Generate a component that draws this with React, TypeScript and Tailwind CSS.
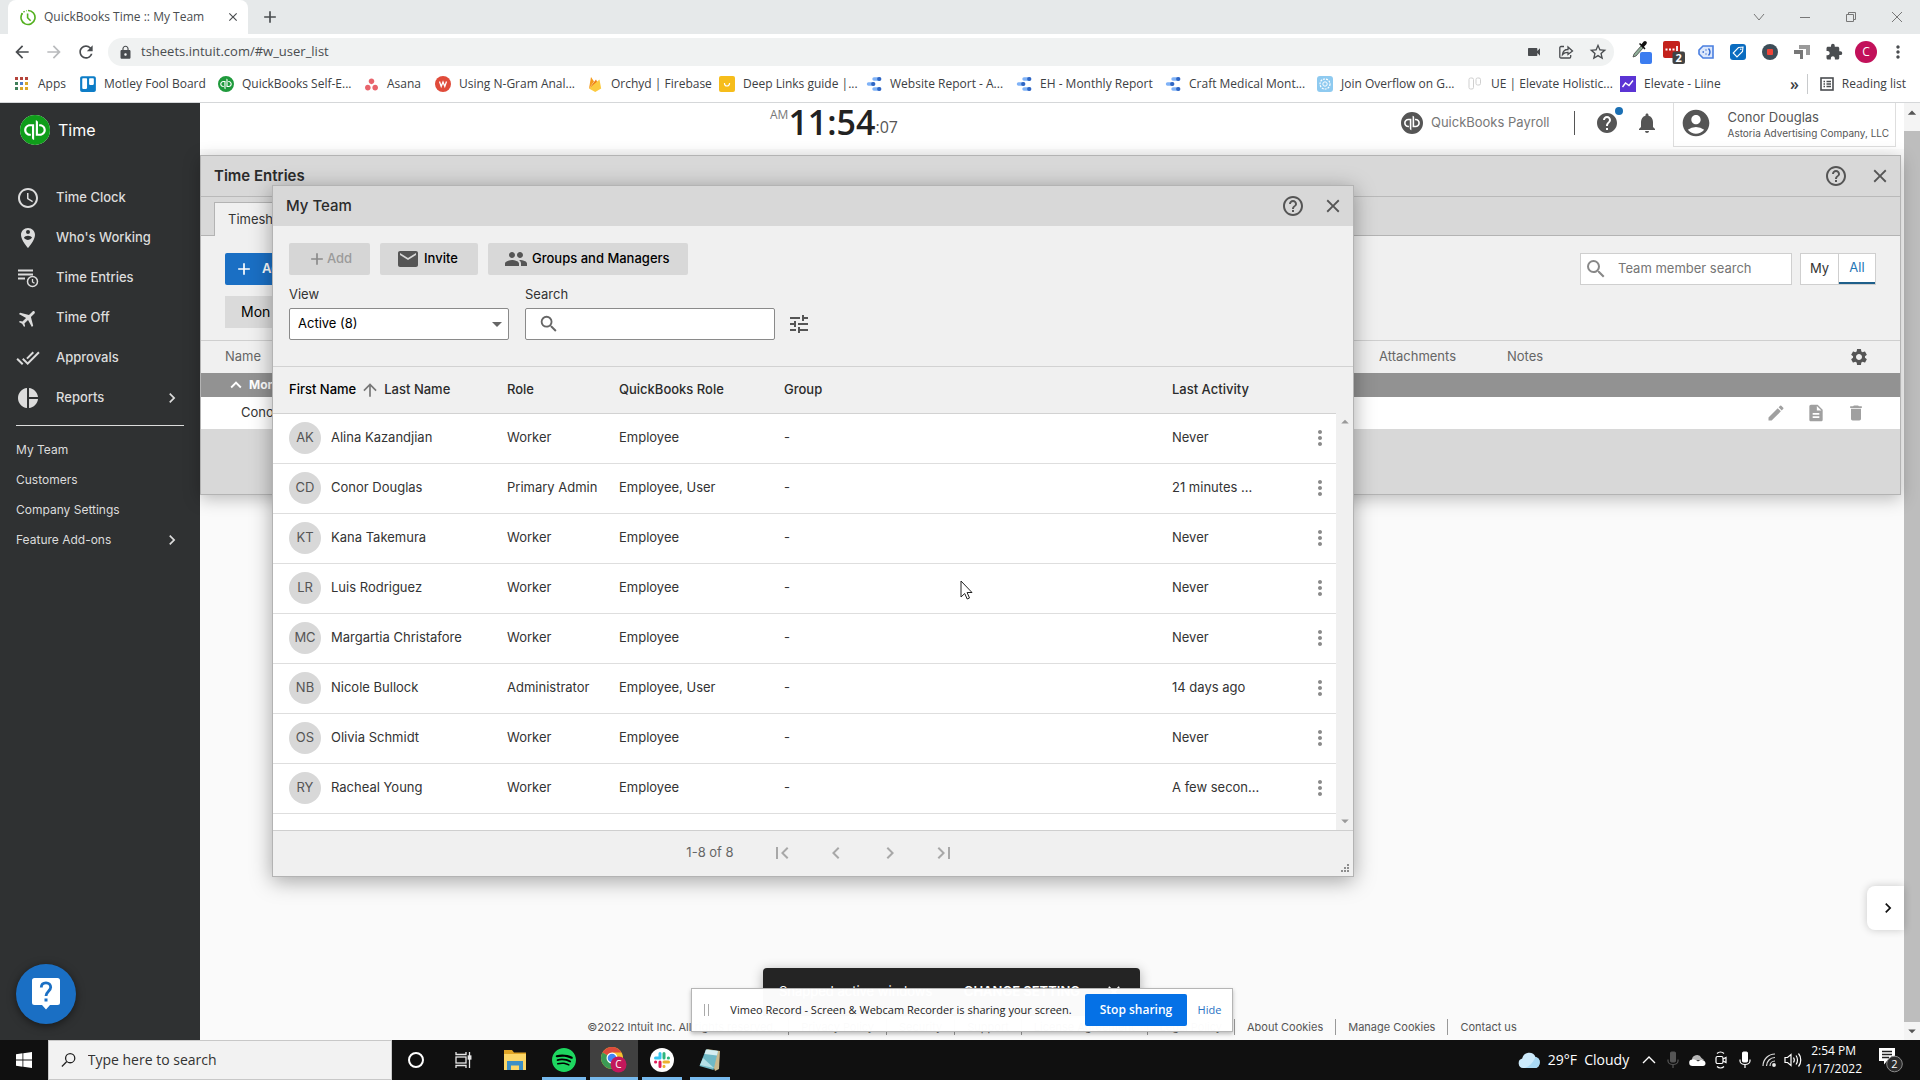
import React from 'react';
import { clsx } from 'clsx';
import {
  MdAccessTime,
  MdAccountCircle,
  MdAdd,
  MdAirplanemodeActive,
  MdArrowBack,
  MdArrowDropDown,
  MdArrowDropUp,
  MdArrowForward,
  MdArrowUpward,
  MdChevronLeft,
  MdChevronRight,
  MdClose,
  MdCreate,
  MdDelete,
  MdDescription,
  MdDoneAll,
  MdEmail,
  MdExtension,
  MdFirstPage,
  MdHelp,
  MdHelpOutline,
  MdKeyboardArrowUp,
  MdLastPage,
  MdLock,
  MdMoreVert,
  MdNotifications,
  MdPeople,
  MdPersonPinCircle,
  MdPieChart,
  MdRefresh,
  MdSearch,
  MdSettings,
  MdStarBorder,
  MdTune,
  MdVideocam,
} from 'react-icons/md';
import { SiAsana, SiQuickbooks, SiSpotify } from 'react-icons/si';
import { FaTrello } from 'react-icons/fa';

const ui = "font-['Open_Sans','Noto_Sans',sans-serif]";

/* ---------- small drawings ---------- */

function QbMark({ size, className }: { size: number; className: string }) {
  return (
    <span className="inline-flex shrink-0 rounded-full bg-white">
      <SiQuickbooks size={size} className={className} />
    </span>
  );
}

function TabClock() {
  return (
    <svg width="16" height="17" viewBox="0 0 16 17" fill="none" stroke="#53b01e">
      <path d="M8 1.5a7 7 0 1 1-5.6 2.8" strokeWidth="1.6" />
      <path d="M1.6 5.5a7 7 0 0 1 5-3.9" strokeWidth="1.4" strokeDasharray="1.5 1.5" />
      <path d="M7.6 4.5v4.2l3 3" strokeWidth="1.6" />
    </svg>
  );
}

function AppsGrid() {
  const colors = ['#b5443b', '#b5443b', '#b5443b', '#3f7f5a', '#4d7fd0', '#d9a72c', '#3f7f5a', '#d9a72c', '#d9a72c'];
  return (
    <svg width="14" height="14" viewBox="0 0 14 14">
      {colors.map((c, i) => (
        <rect key={i} x={(i % 3) * 5} y={Math.floor(i / 3) * 5} width="3" height="3" fill={c} />
      ))}
    </svg>
  );
}

function WMark() {
  return (
    <svg width="16" height="16" viewBox="0 0 16 16">
      <circle cx="8" cy="8" r="8" fill="#e04b3a" />
      <path d="M4.5 5.5 6.2 10.500 8 6l1.800 4.500 1.700-5" fill="none" stroke="#fff" strokeWidth="1.300" />
    </svg>
  );
}

function FirebaseMark() {
  return (
    <svg width="14" height="16" viewBox="0 0 14 16">
      <path d="M1 12.500 3 1l3 4.500z" fill="#f59a1c" />
      <path d="M1 12.500 8 3.500l1.800 4z" fill="#ee7f15" />
      <path d="M1 12.500 11.500 3.500 13.200 12.500 7.200 16z" fill="#fcca3f" />
    </svg>
  );
}

function SmileMark() {
  return (
    <svg width="16" height="16" viewBox="0 0 16 16">
      <rect width="16" height="16" rx="2" fill="#f6bd1b" />
      <path d="M5.500 7v.5a2.500 2.500 0 0 0 5 0V7" fill="none" stroke="#fff" strokeWidth="1.200" />
    </svg>
  );
}

function DataStudioMark() {
  return (
    <svg width="16" height="14" viewBox="0 0 16 14" strokeLinecap="round" strokeWidth="3.400">
      <path d="M8 2h4M2.500 7H6M8 12h4" stroke="#7fb2f7" />
      <path d="M13 2h.5M7 7h.5M13 12h.5" stroke="#2f66c4" strokeWidth="3.800" />
    </svg>
  );
}

function OverflowMark() {
  return (
    <svg width="16" height="16" viewBox="0 0 16 16" fill="none" stroke="#fff">
      <rect width="16" height="16" rx="3" fill="#8ecaf0" stroke="none" />
      <circle cx="8" cy="8" r="5" strokeWidth="1.200" strokeDasharray="2 1" />
      <circle cx="8" cy="8" r="2.200" />
    </svg>
  );
}

function BoardsMark() {
  return (
    <svg width="14" height="14" viewBox="0 0 14 14" fill="none" stroke="#cfcfcf">
      <rect x="1" y="1" width="4.500" height="11" rx="1.500" />
      <rect x="8" y="1" width="4.500" height="7" rx="1.500" />
    </svg>
  );
}

function LiineMark() {
  return (
    <svg width="16" height="16" viewBox="0 0 16 16">
      <rect width="16" height="16" fill="#5b34d4" />
      <path d="m2.500 11 3-4 3.500 2.500 4-5" fill="none" stroke="#fff" strokeWidth="1.400" />
    </svg>
  );
}

function ReadingListIcon() {
  return (
    <svg width="14" height="14" viewBox="0 0 14 14" fill="none" stroke="#4a4d50" strokeWidth="1.600">
      <rect x="1" y="1" width="12" height="12" />
      <path d="M3.500 4.500h1.500M3.500 7h1.500M3.500 9.500h1.500M6.500 4.500h4.500M6.500 7h4.500M6.500 9.500h4.500" strokeWidth="1.300" />
    </svg>
  );
}

function ShareIcon() {
  return (
    <svg width="16" height="16" viewBox="0 0 16 16" fill="none" stroke="#4a4d50" strokeWidth="1.300">
      <path d="M6 2.500H3a1.200 1.200 0 0 0-1.200 1.200v9A1.200 1.200 0 0 0 3 14h8.500a1.200 1.200 0 0 0 1.200-1.200V11" />
      <path d="M4.500 10.500c.4-3.500 2.500-5 5.500-5V3l4.500 4L10 10.500V8.300c-2.500 0-4.200.6-5.500 2.200z" />
    </svg>
  );
}

function EyedropperIcon() {
  return (
    <svg width="20" height="24" viewBox="0 0 20 24">
      <rect x="8" y="12" width="12" height="12" rx="2" fill="#3b7cf0" />
      <path d="m1 17 1-3 7-8 2 2-7 8z" fill="#8fae98" stroke="#444" strokeWidth=".8" />
      <path d="m7 4 5.500 5.500 1-1-1.500-1.700 2.300-2.600a1.800 1.800 0 0 0-2.600-2.600L9.500 4.200 8 3z" fill="#111" />
    </svg>
  );
}

function RedDotsIcon() {
  return (
    <svg width="22" height="24" viewBox="0 0 22 24">
      <rect y="1" width="17" height="17" rx="2" fill="#c4221c" />
      <path d="M2.500 9.500h2M6 9.500h2M9.500 9.500h2M14 6v5" stroke="#fff" strokeWidth="1.800" />
      <rect x="9.500" y="11.500" width="12.500" height="12.500" rx="2" fill="#434343" />
      <text x="15.700" y="22" textAnchor="middle" fontSize="11" fontWeight="700" fill="#fff" fontFamily="Open Sans, sans-serif">2</text>
    </svg>
  );
}

function BlueTagIcon() {
  return (
    <svg width="16" height="14" viewBox="0 0 16 14">
      <path d="M5 1h10v12H5L1 9V5z" fill="#dbe7fb" stroke="#4a7fe0" strokeWidth="1.600" />
      <path d="M4.500 7h1.500M8 4.500v1M8 8.500v1M10.500 3.500c1.700 2 1.700 5 0 7" stroke="#2f66d0" strokeWidth="1.400" fill="none" />
    </svg>
  );
}

function TagIcon() {
  return (
    <svg width="16" height="16" viewBox="0 0 16 16">
      <rect width="16" height="16" rx="3" fill="#0a6cc0" />
      <path d="M8.500 3.500 13 3l-.5 4.500L7 13 3.200 9z" fill="none" stroke="#fff" strokeWidth="1.100" />
      <circle cx="10.800" cy="5.300" r=".8" fill="#fff" />
    </svg>
  );
}

function RecordIcon() {
  return (
    <svg width="16" height="16" viewBox="0 0 16 16">
      <circle cx="8" cy="8" r="8" fill="#3d4d58" />
      <rect x="5" y="5" width="6" height="6" rx="1" fill="#f04438" />
    </svg>
  );
}

function CornersIcon() {
  return (
    <svg width="16" height="16" viewBox="0 0 16 16">
      <path d="M5 1h11v10h-4V5H5z" fill="#9a9a9a" />
      <path d="M0 6h9v9H6v-5H0z" fill="#777" />
    </svg>
  );
}

function ListClockIcon() {
  return (
    <svg width="22" height="20" viewBox="0 0 22 20" fill="none" stroke="currentColor">
      <path d="M1 2.500h15M1 6.500h15M1 10.500h7" strokeWidth="2" />
      <circle cx="15.500" cy="13.500" r="5" strokeWidth="1.500" />
      <path d="M15.500 11v3l2 1.300" strokeWidth="1.300" />
    </svg>
  );
}

function HelpBubble() {
  return (
    <svg width="28" height="32" viewBox="0 0 28 32">
      <path d="M2.500 0h23A2.500 2.500 0 0 1 28 2.500v22a2.500 2.500 0 0 1-2.500 2.500H18l-4 4.500-4-4.500H2.500A2.500 2.500 0 0 1 0 24.500v-22A2.500 2.500 0 0 1 2.500 0z" fill="#fff" />
      <path d="M9.300 9.500c0-3 2-4.700 4.700-4.700s4.700 1.700 4.700 4.500c0 3.700-4.700 4.200-4.700 8.700" fill="none" stroke="#1a6fc4" strokeWidth="2.800" />
      <rect x="12.500" y="20.500" width="3" height="3" fill="#1a6fc4" />
    </svg>
  );
}

function ChromeMark() {
  return (
    <svg width="28" height="28" viewBox="0 0 28 28">
      <circle cx="12" cy="12" r="11" fill="#f3c32f" />
      <path d="M12 12 2.500 6.500A11 11 0 0 1 21.500 6.500H12z" fill="#dd4b3c" />
      <path d="M12 12 2.500 6.500A11 11 0 0 0 11.500 23l5-8.500z" fill="#3b9a55" />
      <circle cx="12" cy="12" r="5.500" fill="#fff" />
      <circle cx="12" cy="12" r="4.300" fill="#4285f4" />
      <circle cx="18.500" cy="18.500" r="8" fill="#c2185b" />
      <text x="18.500" y="22" textAnchor="middle" fontSize="10" fill="#fff" fontFamily="Open Sans, sans-serif">C</text>
    </svg>
  );
}

function SlackMark() {
  return (
    <svg width="24" height="24" viewBox="0 0 24 24" strokeLinecap="round" strokeWidth="3">
      <circle cx="12" cy="12" r="12" fill="#fff" />
      <path d="M10 5.500v4M5.500 10H10" stroke="#36c5f0" />
      <path d="M14 5.500V10M18.500 10h-.2" stroke="#2eb67d" />
      <path d="M14 14h4.500M14 18.500v-.2" stroke="#ecb22e" />
      <path d="M10 14v4.500M5.500 14h.2" stroke="#e01e5a" />
    </svg>
  );
}

function NotepadMark() {
  return (
    <svg width="24" height="24" viewBox="0 0 24 24">
      <path d="M9 1 22 3 21 21l-4 2z" fill="#c9b98d" />
      <path d="M8 1.500 20 3 15.500 22 1.500 18z" fill="#6fb9c6" />
      <path d="M8 1.500 20 3l-1 4.500L6.500 6z" fill="#d6eef1" />
      <path d="M5 10l11 10-14-3z" fill="#b6e0e6" />
    </svg>
  );
}

function FolderMark() {
  return (
    <svg width="22" height="22" viewBox="0 0 22 22">
      <path d="M0 1h8l2 2.500h12V9H0z" fill="#e0a526" />
      <path d="M0 5h22v16H0z" fill="#fbd667" />
      <path d="M3 12h16v9h-4v-4.500H7V21H3z" fill="#3c8fc6" />
    </svg>
  );
}

function TaskViewIcon() {
  return (
    <svg width="18" height="18" viewBox="0 0 18 18" fill="none" stroke="#e8e8e8" strokeWidth="1.300">
      <path d="M1 1v2.500h10V1M1 17v-2.500h10V17M14.500 1v16" />
      <rect x="1" y="6" width="10" height="6" />
      <rect x="13.300" y="5" width="2.500" height="3" fill="#e8e8e8" />
    </svg>
  );
}

function CloudMark() {
  return (
    <svg width="22" height="18" viewBox="0 0 22 18">
      <path d="M5 17a4.800 4.800 0 0 1-.8-9.400A7 7 0 0 1 17.500 6 5.600 5.600 0 0 1 16.500 17z" fill="#cdeafb" />
      <path d="M5 17c4 0 9-3 12.500-11A5.600 5.600 0 0 1 16.500 17z" fill="#a9d9f5" />
    </svg>
  );
}

function OneDriveMark() {
  return (
    <svg width="17" height="12" viewBox="0 0 17 12">
      <path d="M3 6.500A5 5 0 0 1 12.500 4L15 6z" fill="#b5b5b5" />
      <path d="M3.500 12a3.300 3.300 0 0 1 0-6.600c2-.3 4 1 5.500 2 1.500-2 7-2.500 7.500 1.500.2 1.800-1 3.100-2.500 3.100z" fill="#fff" />
    </svg>
  );
}

function MeetNowIcon() {
  return (
    <svg width="14" height="18" viewBox="0 0 14 18" fill="none" stroke="#fff" strokeWidth="1.200">
      <rect x="2" y="5.500" width="7" height="7" rx="1.500" />
      <path d="m9 8 3-1.500v5L9 10M3 2.500c2-1.800 5-1.800 7 0M3 15.500c2 1.800 5 1.800 7 0" />
    </svg>
  );
}

function MicIcon({ color }: { color: string }) {
  return (
    <svg width="12" height="18" viewBox="0 0 12 18" fill="none" stroke={color}>
      <rect x="3.500" y="1" width="5" height="10" rx="1" fill={color} />
      <path d="M1 8.500v1.500a5 3.500 0 0 0 10 0V8.500M6 13.500V17" strokeWidth="1.200" />
    </svg>
  );
}

function WifiIcon() {
  return (
    <svg width="14" height="14" viewBox="0 0 14 14" fill="none" stroke="#ddd" strokeWidth="1.200">
      <path d="M1 13C1 6.400 6.400 1 13 1M4.500 13c0-4.700 3.800-8.500 8.500-8.500M8 13c0-2.800 2.200-5 5-5" />
      <circle cx="12" cy="12" r="1.300" fill="#fff" />
    </svg>
  );
}

function SpeakerIcon() {
  return (
    <svg width="18" height="16" viewBox="0 0 18 16" fill="none" stroke="#fff" strokeWidth="1.200">
      <path d="M1 5.500h2.500L7 2.500v11l-3.500-3H1zM9.500 5.500c1 1.500 1 3.500 0 5M12 3.500c2 2.500 2 6.500 0 9M14.500 1.500c3 3.500 3 9.500 0 13" />
    </svg>
  );
}

function ActionCenterIcon() {
  return (
    <svg width="26" height="26" viewBox="0 0 26 26">
      <path d="M1 1h16v13H9l-3 3.500V14H1z" fill="#fff" />
      <path d="M4 4.500h10M4 7.500h10M4 10.500h7" stroke="#222" strokeWidth="1.300" />
      <circle cx="16.500" cy="17" r="7.800" fill="#2b2b2b" stroke="#8a8a8a" />
      <text x="16.500" y="21" textAnchor="middle" fontSize="11" fill="#fff" fontFamily="Open Sans, sans-serif">2</text>
    </svg>
  );
}

/* ---------- data ---------- */

const bookmarks = [
  { label: 'Apps', width: 'w-[66px]', icon: <AppsGrid /> },
  { label: 'Motley Fool Board', width: 'w-[138px]', icon: <FaTrello size={18} color="#0d7dc7" /> },
  { label: 'QuickBooks Self-E...', width: 'w-[145px]', icon: <QbMark size={16} className="text-[#1f9a3c]" /> },
  { label: 'Asana', width: 'w-[72px]', icon: <SiAsana size={13} color="#e8646c" /> },
  { label: 'Using N-Gram Anal...', width: 'w-[152px]', icon: <WMark /> },
  { label: 'Orchyd | Firebase', width: 'w-[132px]', icon: <FirebaseMark /> },
  { label: 'Deep Links guide |...', width: 'w-[147px]', icon: <SmileMark /> },
  { label: 'Website Report - A...', width: 'w-[150px]', icon: <DataStudioMark /> },
  { label: 'EH - Monthly Report', width: 'w-[149px]', icon: <DataStudioMark /> },
  { label: 'Craft Medical Mont...', width: 'w-[152px]', icon: <DataStudioMark /> },
  { label: 'Join Overflow on G...', width: 'w-[150px]', icon: <OverflowMark /> },
  { label: 'UE | Elevate Holistic...', width: 'w-[153px]', icon: <BoardsMark /> },
  { label: 'Elevate - Liine', width: 'w-[120px]', icon: <LiineMark /> },
];

const extensions = [
  { name: 'Color picker', icon: <EyedropperIcon /> },
  { name: 'Passwords', icon: <RedDotsIcon /> },
  { name: 'Tag assistant', icon: <BlueTagIcon /> },
  { name: 'Tags', icon: <TagIcon /> },
  { name: 'Recorder', icon: <RecordIcon /> },
  { name: 'Corners', icon: <CornersIcon /> },
  { name: 'Extensions', icon: <MdExtension size={18} /> },
];

const trayIcons = [
  { name: 'Microphone off', icon: <MicIcon color="#555" /> },
  { name: 'OneDrive', icon: <OneDriveMark /> },
  { name: 'Meet Now', icon: <MeetNowIcon /> },
  { name: 'Microphone', icon: <MicIcon color="#fff" /> },
  { name: 'Network', icon: <WifiIcon /> },
  { name: 'Volume', icon: <SpeakerIcon /> },
];

const navItems = [
  { label: 'Time Clock', icon: <MdAccessTime size={24} /> },
  { label: "Who's Working", icon: <MdPersonPinCircle size={24} /> },
  { label: 'Time Entries', icon: <ListClockIcon /> },
  { label: 'Time Off', icon: <MdAirplanemodeActive size={22} className="rotate-45" /> },
  { label: 'Approvals', icon: <MdDoneAll size={24} /> },
  { label: 'Reports', icon: <MdPieChart size={24} />, more: true },
];

const subItems = [
  { label: 'My Team' },
  { label: 'Customers' },
  { label: 'Company Settings' },
  { label: 'Feature Add-ons', more: true },
];

interface Member {
  initials: string;
  name: string;
  role: string;
  qbRole: string;
  activity: string;
}

const members: Member[] = [
  { initials: 'AK', name: 'Alina Kazandjian', role: 'Worker', qbRole: 'Employee', activity: 'Never' },
  { initials: 'CD', name: 'Conor Douglas', role: 'Primary Admin', qbRole: 'Employee, User', activity: '21 minutes ...' },
  { initials: 'KT', name: 'Kana Takemura', role: 'Worker', qbRole: 'Employee', activity: 'Never' },
  { initials: 'LR', name: 'Luis Rodriguez', role: 'Worker', qbRole: 'Employee', activity: 'Never' },
  { initials: 'MC', name: 'Margartia Christafore', role: 'Worker', qbRole: 'Employee', activity: 'Never' },
  { initials: 'NB', name: 'Nicole Bullock', role: 'Administrator', qbRole: 'Employee, User', activity: '14 days ago' },
  { initials: 'OS', name: 'Olivia Schmidt', role: 'Worker', qbRole: 'Employee', activity: 'Never' },
  { initials: 'RY', name: 'Racheal Young', role: 'Worker', qbRole: 'Employee', activity: 'A few secon...' },
];

/* ---------- browser ---------- */

function BrowserChrome() {
  return (
    <header className={clsx('shrink-0 border-b border-[#d5d7d9] bg-white text-[#4a4d50]', ui)}>
      <div className="flex h-[34px] items-stretch bg-[#e6e9ea] pl-2">
        <div className="flex w-60 items-center rounded-t-lg bg-white pl-3 pr-2">
          <TabClock />
          <span className="ml-2 flex-1 text-xs">QuickBooks Time :: My Team</span>
          <button aria-label="Close tab"><MdClose size={14} /></button>
        </div>
        <button aria-label="New tab" className="ml-3"><MdAdd size={20} /></button>
        <div className="ml-auto flex items-center text-[#777]">
          <button aria-label="Search tabs" className="flex w-[46px] justify-center">
            <svg width="12" height="12" viewBox="0 0 12 12" fill="none" stroke="currentColor"><path d="m1 3 5 6 5-6" /></svg>
          </button>
          <button aria-label="Minimize" className="flex w-[46px] justify-center">
            <svg width="12" height="12" viewBox="0 0 12 12" stroke="currentColor"><path d="M1 6.500h10" /></svg>
          </button>
          <button aria-label="Restore" className="flex w-[46px] justify-center">
            <svg width="12" height="12" viewBox="0 0 12 12" fill="none" stroke="currentColor"><path d="M1.500 3.500h7v7h-7zM3.500 3.500v-2h7v7h-2" /></svg>
          </button>
          <button aria-label="Close window" className="flex w-[46px] justify-center">
            <svg width="12" height="12" viewBox="0 0 12 12" stroke="currentColor"><path d="m1 1 10 10M11 1 1 11" /></svg>
          </button>
        </div>
      </div>

      <div className="flex h-9 items-center">
        <div className="flex w-[108px] items-center justify-between pl-3 pr-3">
          <button aria-label="Back"><MdArrowBack size={20} /></button>
          <button aria-label="Forward"><MdArrowForward size={20} className="text-[#b9bbbd]" /></button>
          <button aria-label="Reload"><MdRefresh size={20} /></button>
        </div>
        <div className="flex h-7 flex-1 items-center rounded-full bg-[#f0f2f2] pl-[10px]">
          <MdLock size={15} />
          <input
            aria-label="Address"
            className="ml-2 flex-1 bg-transparent text-[13px] outline-none"
            defaultValue="tsheets.intuit.com/#w_user_list"
          />
          <span className="flex w-8 justify-center"><MdVideocam size={16} /></span>
          <span className="flex w-8 justify-center"><ShareIcon /></span>
          <span className="flex w-8 justify-center"><MdStarBorder size={20} /></span>
        </div>
        <div className="flex h-7 items-center pl-3 pr-[6px]">
          {extensions.map((e) => (
            <button key={e.name} aria-label={e.name} className="flex w-8 justify-center">{e.icon}</button>
          ))}
          <span className="flex w-8 justify-center">
            <span className="flex h-[22px] w-[22px] items-center justify-center rounded-full bg-[#c2115a] text-xs text-white">C</span>
          </span>
          <button aria-label="Menu" className="flex w-8 justify-center"><MdMoreVert size={20} /></button>
        </div>
      </div>

      <nav className="flex h-8 items-center pb-1 pl-[14px] text-xs text-[#3c4043]">
        {bookmarks.map((b) => (
          <a key={b.label} href="#" className={clsx('flex shrink-0 items-center gap-2 whitespace-nowrap', b.width)}>
            <span className="flex w-4 shrink-0 justify-center">{b.icon}</span>
            {b.label}
          </a>
        ))}
        <div className="ml-auto flex items-center pr-[14px]">
          <span className="mr-2 text-base font-semibold leading-5">»</span>
          <span className="mr-3 h-5 w-px bg-[#c8cacc]" />
          <ReadingListIcon />
          <span className="ml-2">Reading list</span>
        </div>
      </nav>
    </header>
  );
}

/* ---------- app ---------- */

function Sidebar() {
  return (
    <aside className="flex w-[200px] shrink-0 flex-col bg-[#2f3132] text-[13px] text-[#dcdcdc]">
      <div className="flex h-[54px] items-center gap-2 pl-5 text-base text-white">
        <QbMark size={30} className="text-[#0f9d1a]" />
        Time
      </div>
      <nav className="pt-[21px]">
        {navItems.map((item) => (
          <a key={item.label} href="#" className="flex h-10 items-center pl-4 pr-[18px] font-medium">
            <span className="mr-4 flex w-6 justify-center">{item.icon}</span>
            {item.label}
            {item.more && <MdChevronRight size={20} className="ml-auto" />}
          </a>
        ))}
      </nav>
      <hr className="mx-4 mb-[9px] mt-[7px] border-[#dcdcdc]" />
      <nav className="text-xs">
        {subItems.map((item) => (
          <a key={item.label} href="#" className="flex h-[30px] items-center pl-4 pr-[18px]">
            {item.label}
            {item.more && <MdChevronRight size={20} className="ml-auto" />}
          </a>
        ))}
      </nav>
      <button
        aria-label="Help"
        className="mb-4 ml-4 mt-auto flex h-[60px] w-[60px] items-center justify-center rounded-full bg-[#1a6fc4] shadow-[0_2px_8px_rgba(0,0,0,0.5)]"
      >
        <HelpBubble />
      </button>
    </aside>
  );
}

function TopBar() {
  return (
    <div className="flex h-[46px] shrink-0 items-start justify-between bg-white pl-[570px] text-[#555]">
      <div className={clsx('flex items-start', ui)}>
        <span className="pt-1 text-xs text-[#777]">AM</span>
        <span className="text-[34px] font-semibold leading-[38px] text-[#222]">11:54</span>
        <span className="pt-3 text-base text-[#555]">:07</span>
      </div>
      <div className="flex items-start pr-2">
        <div className="flex h-10 items-center">
          <QbMark size={22} className="text-[#555]" />
          <span className="ml-2 text-[13px] text-[#777]">QuickBooks Payroll</span>
          <span className="ml-6 mr-5 h-6 w-px bg-[#555]" />
          <button aria-label="Help" className="relative">
            <MdHelp size={24} />
            <span className="absolute -right-1 -top-1 h-2 w-2 rounded-full bg-[#1a6fb4]" />
          </button>
          <button aria-label="Notifications" className="ml-4 mr-[14px]"><MdNotifications size={24} /></button>
        </div>
        <div className="flex h-11 items-center border border-t-0 border-[#dedede] pb-1 pl-[6px] pr-[6px]">
          <MdAccountCircle size={32} className="mr-4" />
          <div className="pt-1 leading-4">
            <div className="text-[13px]">Conor Douglas</div>
            <div className="text-[10px]">Astoria Advertising Company, LLC</div>
          </div>
        </div>
      </div>
    </div>
  );
}

function TimeEntriesWindow() {
  return (
    <section className="mr-[3px] mt-[6px] border border-[#b3b3b3] bg-[#d8d8d8] text-[13px] text-[#333] shadow-[0_4px_16px_rgba(0,0,0,0.25)]">
      <div className="flex h-10 items-center pl-[13px] pr-[9px]">
        <h2 className="text-[15px] font-semibold text-[#2b2b2b]">Time Entries</h2>
        <div className="ml-auto flex items-center gap-[21px] text-[#555]">
          <button aria-label="Time Entries help"><MdHelpOutline size={24} /></button>
          <button aria-label="Close Time Entries"><MdClose size={22} /></button>
        </div>
      </div>
      <div className="flex h-10 items-end border-t border-[#b9b9b9]">
        <span className="h-px w-[13px] bg-[#b3b3b3]" />
        <button className="h-[34px] w-32 border-l border-t border-[#b3b3b3] bg-[#f0f0f0] pl-[13px] text-left">Timesheets</button>
        <span className="h-px flex-1 bg-[#b3b3b3]" />
      </div>
      <div className="flex h-[104px] items-start bg-[#f0f0f0] px-6 pt-[17px]">
        <div className="flex flex-col items-start gap-[11px]">
          <button className="flex h-8 w-28 items-center gap-2 rounded-xs bg-[#1a6fc4] pl-[9px] font-semibold text-white">
            <MdAdd size={20} />
            Add time
          </button>
          <button className="flex h-8 w-28 items-center bg-[#dadada] pl-4 text-sm text-black">Mon</button>
        </div>
        <div className="ml-auto flex gap-2">
          <label className="flex h-8 w-[212px] items-center border border-[#cfcfcf] bg-white pl-[3px] text-[#888]">
            <MdSearch size={24} className="shrink-0" />
            <input
              aria-label="Team member search"
              placeholder="Team member search"
              className="ml-[10px] w-full bg-transparent outline-none placeholder:text-[#757575]"
            />
          </label>
          <div className="flex h-8 border border-[#cfcfcf] bg-white">
            <button className="w-[38px] border-r border-[#cfcfcf]">My</button>
            <button className="w-9 border-b-2 border-[#1e5f8a] text-[#1f76b5]">All</button>
          </div>
        </div>
      </div>
      <table className="w-full table-fixed border-t border-[#cfcfcf]">
        <thead className="bg-[#f0f0f0] text-left text-[#666]">
          <tr className="h-8">
            <th className="w-[1178px] pl-6 font-normal">Name</th>
            <th className="w-32 font-normal">Attachments</th>
            <th className="font-normal">Notes</th>
            <th className="w-36 pr-[31px]">
              <button aria-label="Settings" className="ml-auto block"><MdSettings size={20} className="text-[#555]" /></button>
            </th>
          </tr>
        </thead>
        <tbody>
          <tr className="h-6 bg-[#929292] text-xs font-bold text-white">
            <td colSpan={4} className="pl-6">
              <span className="flex items-center gap-[2px]"><MdKeyboardArrowUp size={22} />Mon</span>
            </td>
          </tr>
          <tr className="h-8 bg-white">
            <td colSpan={3} className="pl-10">Conor</td>
            <td className="pr-[34px]">
              <div className="flex justify-end gap-5 text-[#a0a0a0]">
                <button aria-label="Edit"><MdCreate size={20} /></button>
                <button aria-label="Notes"><MdDescription size={20} /></button>
                <button aria-label="Delete"><MdDelete size={20} /></button>
              </div>
            </td>
          </tr>
        </tbody>
      </table>
      <div className="h-[65px]" />
    </section>
  );
}

function MyTeamWindow() {
  return (
    <section className="absolute left-[72px] top-[82px] w-[1082px] border border-[#b3b3b3] bg-[#f0f0f0] text-[13px] text-[#333] shadow-[0_4px_20px_rgba(0,0,0,0.35)]">
      <div className="flex h-10 items-center bg-[#d8d8d8] pl-[13px] pr-[9px]">
        <h2 className="text-[15px] font-medium text-[#2b2b2b]">My Team</h2>
        <div className="ml-auto flex items-center gap-[17px] text-[#555]">
          <button aria-label="My Team help"><MdHelpOutline size={24} /></button>
          <button aria-label="Close My Team"><MdClose size={22} /></button>
        </div>
      </div>

      <div className="h-[141px] border-b border-[#d2d2d2] px-4 pt-[17px]">
        <div className="flex gap-[10px] font-medium text-black">
          <button disabled className="flex h-8 w-[81px] items-center justify-center rounded-xs bg-[#d6d6d6] text-[#9b9b9b]">
            <MdAdd size={20} className="text-[#8a8a8a]" />
            Add
          </button>
          <button className="flex h-8 w-[98px] items-center gap-1 rounded-xs bg-[#d8d8d8] pl-4">
            <MdEmail size={24} className="text-[#555]" />
            Invite
          </button>
          <button className="flex h-8 w-[200px] items-center gap-1 rounded-xs bg-[#d8d8d8] pl-4">
            <MdPeople size={24} className="text-[#555]" />
            Groups and Managers
          </button>
        </div>
        <div className="mt-[9px] flex items-end gap-4">
          <div>
            <label htmlFor="view" className="block leading-5">View</label>
            <div className="relative mt-1">
              <select id="view" className="h-8 w-[220px] appearance-none rounded-xs border border-[#8a8a8a] bg-white pl-2 text-black">
                <option>Active (8)</option>
              </select>
              <MdArrowDropDown size={24} className="pointer-events-none absolute right-0 top-1 text-[#666]" />
            </div>
          </div>
          <div>
            <label htmlFor="search" className="block leading-5">Search</label>
            <div className="mt-1 flex h-8 w-[250px] items-center rounded-xs border border-[#8a8a8a] bg-white pl-3">
              <MdSearch size={24} className="text-[#666]" />
              <input id="search" className="w-full bg-transparent pl-2 outline-none" />
            </div>
          </div>
          <button aria-label="Filters" className="-ml-1 pb-1"><MdTune size={24} className="text-[#555]" /></button>
        </div>
      </div>

      <div className="relative bg-white pb-4">
        <table className="w-full table-fixed">
          <thead className="bg-[#f0f0f0] text-left">
            <tr className="h-[46px] border-b border-[#d2d2d2] text-[#2b2b2b]">
              <th className="w-[234px] pl-4 font-medium">
                <span className="flex items-center gap-1 text-black">
                  First Name <MdArrowUpward size={20} className="text-[#777]" />
                  <span className="text-[#2b2b2b]">Last Name</span>
                </span>
              </th>
              <th className="w-28 font-medium">Role</th>
              <th className="w-[165px] font-medium">QuickBooks Role</th>
              <th className="w-[388px] font-medium">Group</th>
              <th className="w-[120px] font-medium">Last Activity</th>
              <th />
            </tr>
          </thead>
          <tbody>
            {members.map((m) => (
              <tr key={m.name} className="h-[50px] border-b border-[#dedede]">
                <td className="pl-4">
                  <span className="flex items-center gap-[10px] whitespace-nowrap">
                    <span className="flex h-8 w-8 items-center justify-center rounded-full bg-[#d8d8d8] text-[#555]">{m.initials}</span>
                    {m.name}
                  </span>
                </td>
                <td>{m.role}</td>
                <td>{m.qbRole}</td>
                <td>-</td>
                <td>{m.activity}</td>
                <td className="pl-4">
                  <button aria-label={`More actions for ${m.name}`} className="block"><MdMoreVert size={24} className="text-[#8a8a8a]" /></button>
                </td>
              </tr>
            ))}
          </tbody>
        </table>
        <div className="absolute bottom-0 right-0 top-[46px] flex w-[17px] flex-col items-center justify-between bg-[#f0f0f0] text-[#999]">
          <MdArrowDropUp size={18} />
          <MdArrowDropDown size={18} />
        </div>
      </div>

      <div className="relative flex h-[46px] items-center justify-center border-t border-[#cfcfcf] text-[#666]">
        <span className="ml-4 mr-9">1-8 of 8</span>
        <div className="flex gap-[30px] text-[#a8a8a8]">
          <button aria-label="First page"><MdFirstPage size={24} /></button>
          <button aria-label="Previous page"><MdChevronLeft size={24} /></button>
          <button aria-label="Next page"><MdChevronRight size={24} /></button>
          <button aria-label="Last page"><MdLastPage size={24} /></button>
        </div>
        <svg width="9" height="9" viewBox="0 0 9 9" fill="#8e8e8e" className="absolute bottom-[3px] right-[3px]">
          <path d="M6 0h2v2H6zM3 3h2v2H3zM6 3h2v2H6zM0 6h2v2H0zM3 6h2v2H3zM6 6h2v2H6z" />
        </svg>
      </div>
    </section>
  );
}

function Footer() {
  return (
    <footer className="mt-auto flex h-[26px] items-center justify-center text-[11px] text-[#555]">
      <span className="pr-3">©2022 Intuit Inc. All rights reserved.</span>
      <a href="#" className="border-l border-[#999] px-3 leading-4">Privacy Policy</a>
      <a href="#" className="border-l border-[#999] px-3 leading-4">Security</a>
      <a href="#" className="border-l border-[#999] px-3 leading-4">Support</a>
      <a href="#" className="border-l border-[#999] px-3 leading-4">License Agreement</a>
      <a href="#" className="border-l border-[#999] px-3 leading-4">Legal Policy</a>
      <a href="#" className="border-l border-[#999] px-3 leading-4">About Cookies</a>
      <a href="#" className="border-l border-[#999] px-3 leading-4">Manage Cookies</a>
      <a href="#" className="border-l border-[#999] pl-3 leading-4">Contact us</a>
    </footer>
  );
}

function ShareBar() {
  return (
    <div
      className={clsx(
        'absolute bottom-2 left-[491px] flex h-11 items-center border border-[#b5b5b5] bg-white/98 pl-2 text-[11px] text-[#222] shadow-[0_2px_4px_rgba(0,0,0,0.25)]',
        ui
      )}
    >
      <span className="mx-1 h-3 w-[5px] border-x border-[#aaa]" />
      <span className="ml-1 w-[368px] whitespace-nowrap text-center">Vimeo Record - Screen &amp; Webcam Recorder is sharing your screen.</span>
      <button className="h-8 w-[102px] rounded-xs bg-[#0571e6] text-xs font-semibold text-white">Stop sharing</button>
      <button className="w-[45px] text-center text-[#2a72c4]">Hide</button>
    </div>
  );
}

function Taskbar() {
  return (
    <footer className={clsx('flex h-10 shrink-0 items-stretch bg-[#101010] text-white', ui)}>
      <button aria-label="Start" className="flex w-12 items-center justify-center">
        <svg width="16" height="16" viewBox="0 0 16 16" fill="#fff">
          <path d="M0 2.200 6.500 1.300v6.200H0zM7.300 1.200 16 0v7.500H7.300zM0 8.400h6.500v6.300L0 13.800zM7.300 8.400H16V16l-8.700-1.200z" />
        </svg>
      </button>
      <label className="flex w-[344px] items-center border border-[#c8c8c8] bg-[#f2f2f2] pl-3 text-[#222]">
        <svg width="16" height="16" viewBox="0 0 16 16" fill="none" stroke="#222" strokeWidth="1.400">
          <circle cx="10" cy="6" r="5" />
          <path d="M6.300 9.700 1 15" />
        </svg>
        <input
          aria-label="Type here to search"
          placeholder="Type here to search"
          className="ml-3 w-full bg-transparent text-sm outline-none placeholder:text-[#333]"
        />
      </label>
      <button aria-label="Cortana" className="flex w-12 items-center justify-center">
        <span className="h-4 w-4 rounded-full border-2 border-white" />
      </button>
      <button aria-label="Task view" className="flex w-12 items-center justify-center"><TaskViewIcon /></button>
      <button aria-label="File Explorer" className="flex w-[54px] items-center justify-center"><FolderMark /></button>
      <button aria-label="Spotify" className="mr-1 flex w-11 items-center justify-center border-b-3 border-[#76b9ed] pt-[3px]">
        <span className="rounded-full bg-black"><SiSpotify size={24} color="#1ed760" /></span>
      </button>
      <button aria-label="Chrome" className="mr-1 flex w-12 items-center justify-center border-b-3 border-[#76b9ed] bg-[#404040] pt-[3px]"><ChromeMark /></button>
      <button aria-label="Slack" className="mr-2 flex w-10 items-center justify-center border-b-3 border-[#76b9ed] pt-[3px]"><SlackMark /></button>
      <button aria-label="Notepad" className="flex w-10 items-center justify-center border-b-3 border-[#76b9ed] pt-[3px]"><NotepadMark /></button>

      <div className="ml-auto flex items-center pr-4">
        <CloudMark />
        <span className="ml-2 mr-2 whitespace-pre text-sm">29°F  Cloudy</span>
        <button aria-label="Show hidden icons" className="flex w-6 justify-center">
          <svg width="14" height="8" viewBox="0 0 14 8" fill="none" stroke="#fff" strokeWidth="1.400">
            <path d="m1 7 6-6 6 6" />
          </svg>
        </button>
        {trayIcons.map((t) => (
          <button key={t.name} aria-label={t.name} className="flex w-6 justify-center">{t.icon}</button>
        ))}
        <div className="mr-4 text-center text-xs leading-[18px]">
          <div>2:54 PM</div>
          <div>1/17/2022</div>
        </div>
        <ActionCenterIcon />
      </div>
    </footer>
  );
}

export default function App() {
  return (
    <div className="flex h-screen flex-col overflow-hidden bg-white font-['Inter',sans-serif]">
      <BrowserChrome />
      <div className="flex min-h-0 flex-1">
        <Sidebar />
        <main className="relative flex min-w-0 flex-1 flex-col bg-[#fafafa]">
          <TopBar />
          <TimeEntriesWindow />
          <Footer />
          <MyTeamWindow />

          {/* Side drawer handle */}
          <button
            aria-label="Open drawer"
            className="absolute bottom-[110px] right-0 flex h-11 w-[37px] items-center justify-center rounded-l-lg bg-white pl-1 text-[#111] shadow-[0_0_8px_rgba(0,0,0,0.2)]"
          >
            <MdChevronRight size={20} />
          </button>

          {/* Toast, mostly behind the share bar */}
          <div className="absolute bottom-6 left-[563px] flex h-12 w-[377px] items-center rounded-t-sm bg-[#242424] px-4 text-[13px] text-white shadow-[0_2px_12px_rgba(0,0,0,0.3)]">
            <span>Snapped active windows</span>
            <span className="ml-auto mr-6 font-semibold">CHANGE SETTING</span>
            <MdClose size={20} />
          </div>
          <ShareBar />

          {/* Mouse pointer */}
          <svg width="13" height="20" viewBox="0 0 13 20" className="pointer-events-none absolute left-[760px] top-[477px]">
            <path d="M1 1v16l3.700-3.500L7.200 19l2.300-1-2.400-5.500H12z" fill="#fff" stroke="#222" />
          </svg>
        </main>
        <div className="flex w-4 shrink-0 flex-col items-center bg-[#f4f4f4] text-[#555]">
          <MdArrowDropUp size={20} />
          <div className="mt-2 w-full flex-1 bg-[#bdbdbd]" />
          <MdArrowDropDown size={18} />
        </div>
      </div>
      <Taskbar />
    </div>
  );
}
